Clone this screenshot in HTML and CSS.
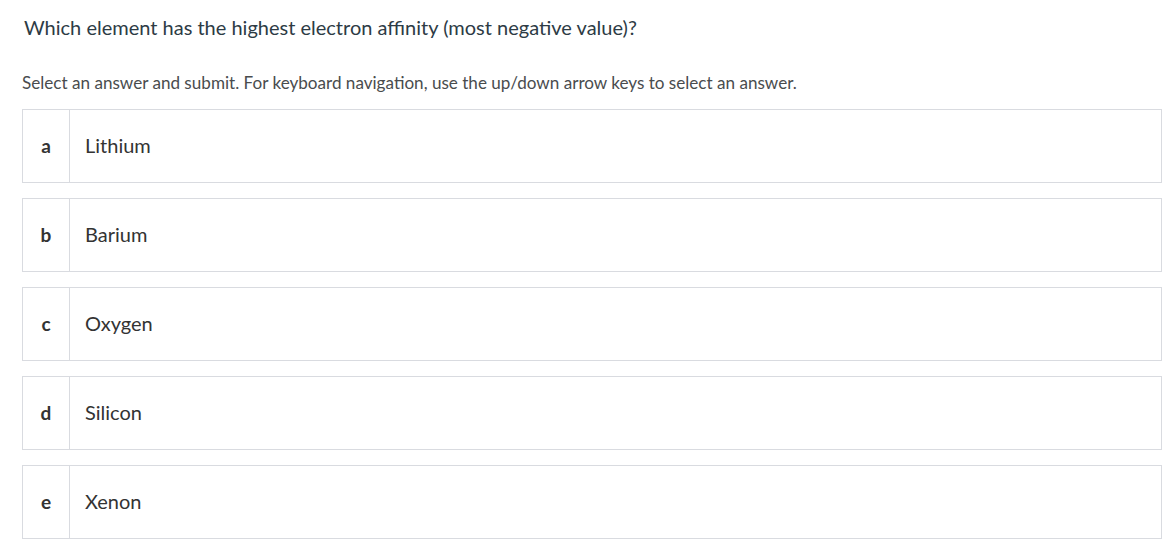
FILE: index.html
```html
<!DOCTYPE html>
<html lang="en">
<head>
    <meta charset="UTF-8">
    <meta name="viewport" content="width=device-width, initial-scale=1.0">
    <title>Question</title>
    <link rel="stylesheet" href="styles.css">
</head>
<body>
    <div class="question">
        <h2 class="question-text">Which element has the highest electron affinity (most negative value)?</h2>
        <p class="instructions">Select an answer and submit. For keyboard navigation, use the up/down arrow keys to select an answer.</p>

        <!-- answer options -->
        <div class="options" role="radiogroup">
            <div class="option" role="radio" tabindex="0">
                <div class="option-letter">a</div>
                <div class="option-label">Lithium</div>
            </div>
            <div class="option" role="radio" tabindex="-1">
                <div class="option-letter">b</div>
                <div class="option-label">Barium</div>
            </div>
            <div class="option" role="radio" tabindex="-1">
                <div class="option-letter">c</div>
                <div class="option-label">Oxygen</div>
            </div>
            <div class="option" role="radio" tabindex="-1">
                <div class="option-letter">d</div>
                <div class="option-label">Silicon</div>
            </div>
            <div class="option" role="radio" tabindex="-1">
                <div class="option-letter">e</div>
                <div class="option-label">Xenon</div>
            </div>
        </div>
    </div>
</body>
</html>
```

FILE: styles.css
```css
body {
    margin: 0;
    background: #fff;
    font-family: "Lato", "Liberation Sans", sans-serif;
    color: #2d3b45;
}
.question {
    width: 1140px;
    padding: 0 0 0 22px;
}
.question-text {
    margin: 0;
    padding: 14px 0 0 2px;
    font-size: 20px;
    font-weight: normal;
    line-height: 26px;
    color: #2d3b45;
}
.instructions {
    margin: 0;
    padding-top: 33px;
    font-size: 17.1px;
    line-height: 20px;
    color: #494c4e;
}
.options {
    display: flex;
    flex-direction: column;
    gap: 15px;
    margin-top: 16px;
}
.option {
    display: flex;
    height: 72px;
    border: 1px solid #d9dbe0;
    cursor: pointer;
}
.option-letter {
    width: 46px;
    border-right: 1px solid #d9dbe0;
    display: flex;
    align-items: center;
    justify-content: center;
    padding-bottom: 2px;
    font-size: 19px;
    font-weight: bold;
    color: #333;
}
.option-label {
    display: flex;
    align-items: center;
    padding: 0 0 2px 15px;
    font-size: 20px;
    color: #333;
}
```
